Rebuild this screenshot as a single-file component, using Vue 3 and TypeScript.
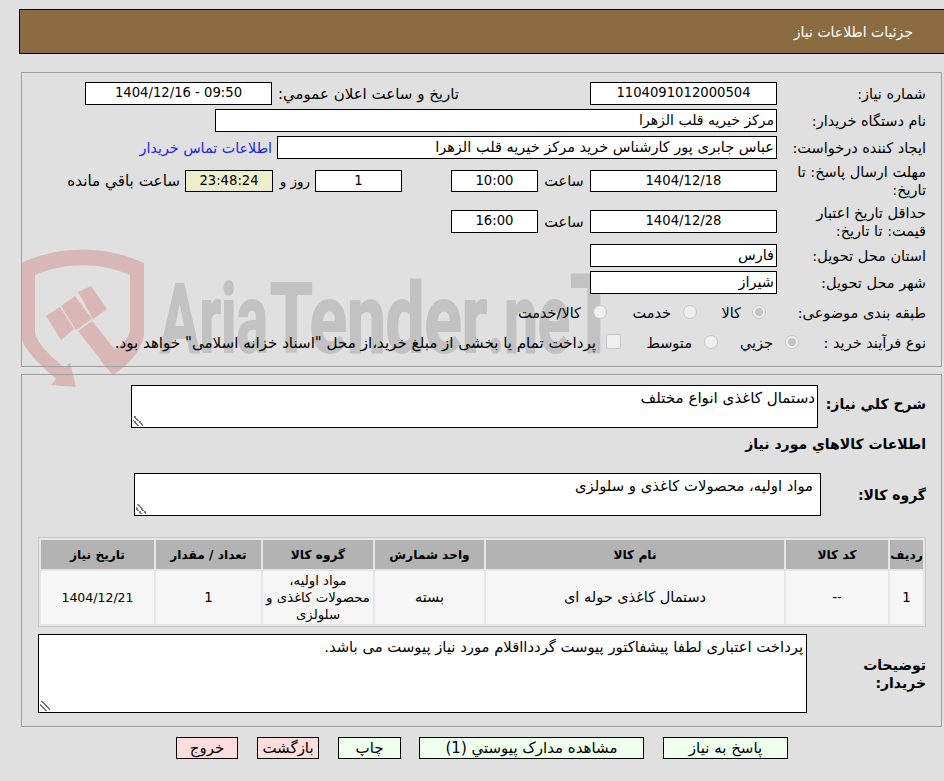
<script setup lang="ts">
interface GoodsRow { row: string; code: string; name: string; unit: string; group: string; qty: string; date: string }
const headers: string[] = ['ردیف', 'کد کالا', 'نام کالا', 'واحد شمارش', 'گروه کالا', 'تعداد / مقدار', 'تاریخ نیاز']
const rows: GoodsRow[] = [
  { row: '1', code: '--', name: 'دستمال کاغذی حوله ای', unit: 'بسته', group: 'مواد اولیه، محصولات کاغذی و سلولزی', qty: '1', date: '1404/12/21' }
]
</script>

<template>
  <div class="page" dir="rtl">
    <svg class="mark" width="640" height="160" viewBox="0 240 640 160" aria-hidden="true">
      <g fill="#d9b7b7">
        <path d="M21 263 C60 245 105 245 144 263 L144 335 C141 352 128 365 113 375 L100 360 C112 352 128 343 130 330 L130 275 C100 262 65 262 35 275 L35 333 C38 345 52 358 70 372 L60 382 C40 365 23 350 21 335 Z" />
        <path d="M51 385 L76 387 L70 362 Z" />
        <path d="M46 316 L60 307 L74 329 L61 340 Z" />
        <path d="M61 306 L75 296 L92 319 L76 330 Z" />
        <path d="M78 292 L91 286 L107 309 L93 319 Z" />
        <path d="M78 331 L92 321 L125 362 L113 375 Z" />
      </g>
      <g class="word">
        <text x="160" y="352" textLength="108" lengthAdjust="spacingAndGlyphs">Aria</text>
        <text x="270" y="352" textLength="217" lengthAdjust="spacingAndGlyphs">Tender</text>
        <text x="487" y="352" textLength="83" lengthAdjust="spacingAndGlyphs">.ne</text>
        <text class="tall" x="570" y="352" textLength="48" lengthAdjust="spacingAndGlyphs">T</text>
      </g>
    </svg>

    <header class="title">جزئیات اطلاعات نیاز</header>

    <section class="panel top">
      <div class="row r1">
        <label class="lbl">شماره نیاز:</label>
        <div class="box mid c">1104091012000504</div>
        <span class="lbl2 pub">تاریخ و ساعت اعلان عمومي:</span>
        <div class="box pubv c" dir="ltr">1404/12/16 - 09:50</div>
      </div>
      <div class="row r2">
        <label class="lbl">نام دستگاه خریدار:</label>
        <div class="box buyer">مرکز خیریه قلب الزهرا</div>
      </div>
      <div class="row r3">
        <label class="lbl">ایجاد کننده درخواست:</label>
        <div class="box creator">عباس جابری پور کارشناس خرید مرکز خیریه قلب الزهرا</div>
        <a class="contact">اطلاعات تماس خریدار</a>
      </div>
      <div class="row r4">
        <label class="lbl">مهلت ارسال پاسخ: تا تاریخ:</label>
        <div class="box mid c">1404/12/18</div>
        <span class="lbl2 hr">ساعت</span>
        <div class="box time c">10:00</div>
        <div class="box days c">1</div>
        <span class="lbl2 rooz">روز و</span>
        <div class="box remain c">23:48:24</div>
        <span class="lbl2 left">ساعت باقي مانده</span>
      </div>
      <div class="row r5">
        <label class="lbl">حداقل تاریخ اعتبار قیمت: تا تاریخ:</label>
        <div class="box mid c">1404/12/28</div>
        <span class="lbl2 hr">ساعت</span>
        <div class="box time c">16:00</div>
      </div>
      <div class="row r6">
        <label class="lbl">استان محل تحویل:</label>
        <div class="box mid">فارس</div>
      </div>
      <div class="row r7">
        <label class="lbl">شهر محل تحویل:</label>
        <div class="box mid">شیراز</div>
      </div>
      <div class="row r8">
        <label class="lbl">طبقه بندی موضوعی:</label>
        <span class="radio on a1"></span><span class="opt w1">کالا</span>
        <span class="radio a2"></span><span class="opt w2">خدمت</span>
        <span class="radio a3"></span><span class="opt w3">کالا/خدمت</span>
      </div>
      <div class="row r9">
        <label class="lbl">نوع فرآیند خرید :</label>
        <span class="radio on b1"></span><span class="opt v1">جزيي</span>
        <span class="radio b2"></span><span class="opt v2">متوسط</span>
        <span class="check"></span><span class="opt v3">پرداخت تمام یا بخشی از مبلغ خرید،از محل "اسناد خزانه اسلامی" خواهد بود.</span>
      </div>
    </section>

    <section class="panel bottom">
      <div class="row s1">
        <label class="blbl l1">شرح کلي نیاز:</label>
        <div class="area a-desc">دستمال کاغذی انواع مختلف<i class="grip"></i></div>
      </div>
      <h3 class="blbl goods">اطلاعات کالاهاي مورد نیاز</h3>
      <div class="row s2">
        <label class="blbl l2">گروه کالا:</label>
        <div class="area a-group">مواد اولیه، محصولات کاغذی و سلولزی<i class="grip"></i></div>
      </div>
      <table class="grid">
        <colgroup>
          <col class="k1" /><col class="k2" /><col class="k3" /><col class="k4" /><col class="k5" /><col class="k6" /><col />
        </colgroup>
        <thead>
          <tr><th v-for="h in headers" :key="h">{{ h }}</th></tr>
        </thead>
        <tbody>
          <tr v-for="r in rows" :key="r.row">
            <td>{{ r.row }}</td><td>{{ r.code }}</td><td class="big">{{ r.name }}</td><td class="big">{{ r.unit }}</td>
            <td>{{ r.group }}</td><td>{{ r.qty }}</td><td class="date">{{ r.date }}</td>
          </tr>
        </tbody>
      </table>
      <div class="row s3">
        <label class="blbl l3">توضیحات خریدار:</label>
        <div class="area a-note">پرداخت اعتباری لطفا پیشفاکتور پیوست گرددااقلام مورد نیاز پیوست می باشد.<i class="grip"></i></div>
      </div>
    </section>

    <footer class="actions">
      <button class="btn ok w-reply">پاسخ به نیاز</button>
      <button class="btn ok w-docs">مشاهده مدارک پیوستي (1)</button>
      <button class="btn ok w-print">چاپ</button>
      <button class="btn no w-back">بازگشت</button>
      <button class="btn no w-exit">خروج</button>
    </footer>
  </div>
</template>

<style>
html, body { margin: 0; background: #e0e0e0; }
</style>

<style scoped>
.page {
  position: relative; width: 944px; height: 781px; box-sizing: border-box; padding-top: 9px; overflow: hidden;
  background: #e0e0e0; color: #000;
  font-family: "DejaVu Sans", "Liberation Sans", sans-serif; font-size: 14.5px; line-height: 18px;
}
.mark { position: absolute; left: 0; top: 240px; direction: ltr; pointer-events: none; }
.word { font-family: "Roboto", "Liberation Sans", sans-serif; font-weight: 700; font-size: 97px; fill: #c2c2c2; stroke: #c2c2c2; stroke-width: 2px; stroke-linejoin: round; }
.tall { font-size: 110px; }
.title {
  position: relative; box-sizing: border-box; height: 45px; margin: 0 0 0 19px; border: 1px solid #000; border-right: 0;
  background: #8b6b40; color: #fff; padding: 13px 31px 0 0; font-size: 14px;
}
.panel { position: relative; box-sizing: border-box; margin: 18px 2px 0 21px; border: 1px solid #a0a0a0; }
.top { height: 295px; }
.bottom { height: 353px; margin-top: 7px; }
.row { position: relative; display: flex; align-items: center; }
.lbl { flex: none; box-sizing: border-box; width: 164px; padding-right: 15px; }
.box {
  flex: none; box-sizing: border-box; height: 23px; line-height: 20px; border: 1px solid #000; background: #fff;
  padding: 0 2px; white-space: nowrap; overflow: hidden;
}
.c { text-align: center; font-size: 13.2px; }
.mid { width: 187px; }
.lbl2 { flex: none; white-space: nowrap; }
.r1 { margin-top: 9px; height: 23px; }
.pub { margin-right: 131px; width: 182px; font-size: 15px; }
.pubv { width: 187px; margin-right: 5px; }
.r2 { margin-top: 4px; height: 23px; }
.buyer { width: 562px; font-size: 14px; }
.r3 { margin-top: 4px; height: 23px; }
.creator { width: 500px; }
.contact { color: #2222ee; margin-right: 5px; white-space: nowrap; font-size: 14.3px; }
.r4 { margin-top: 11px; height: 22px; }
.r4 .box { height: 22px; }
.hr { width: 52px; text-align: center; }
.time { width: 87px; }
.days { width: 87px; margin-right: 49px; }
.rooz { width: 37px; padding-right: 5px; font-size: 13.5px; }
.remain { width: 88px; background: #eeeecc; }
.left { margin-right: 5px; font-size: 15.2px; }
.r5 { margin-top: 18px; height: 23px; }
.r6 { margin-top: 11px; height: 23px; }
.r7 { margin-top: 4px; height: 23px; }
.r8 { margin-top: 8px; height: 22px; }
.r9 { margin-top: 8px; height: 22px; }
.r9 .lbl { width: 142px; white-space: nowrap; }
.radio { flex: none; position: relative; box-sizing: border-box; width: 14px; height: 14px; margin-top: -3px; border-radius: 50%; border: 1px solid #c8c8c8; background: #efefef; }
.radio.on::after { content: ""; position: absolute; inset: 2px; border-radius: 50%; background: #c4c4c4; }
.check { flex: none; box-sizing: border-box; width: 15px; height: 15px; margin: -3px 26px 0 0; border-radius: 2px; border: 1px solid #c8c8c8; background: #efefef; }
.opt { flex: none; white-space: nowrap; }
.a1 { margin-right: 11px; }
.w1 { margin-right: 11px; width: 20px; }
.a2 { margin-right: 24px; }
.w2 { margin-right: 12px; width: 40px; }
.a3 { margin-right: 24px; }
.w3 { margin-right: 12px; }
.v1 { margin-right: 12px; width: 35px; }
.b2 { margin-right: 20px; }
.v2 { margin-right: 12px; width: 45px; }
.v3 { margin-right: 10px; font-size: 15.1px; }
.blbl { font-weight: 700; font-size: 14px; margin: 0; }
.s1 { margin-top: 10px; align-items: flex-start; }
.l1 { width: 123px; flex: none; box-sizing: border-box; padding: 10px 15px 0 0; }
.area {
  position: relative; flex: none; box-sizing: border-box; border: 1px solid #000; background: #fff;
  padding: 3px 2px 0 0; font-size: 14.8px;
}
.a-desc { width: 687px; height: 43px; font-size: 15.1px; }
.goods { margin: 7px 15px 0 0; height: 18px; }
.s2 { margin-top: 20px; align-items: flex-start; }
.l2 { width: 120px; flex: none; box-sizing: border-box; padding: 13px 15px 0 0; }
.a-group { width: 687px; height: 43px; padding-right: 7px; }
.grid {
  box-sizing: border-box; width: 888px; margin: 21px 15px 0 0; table-layout: fixed;
  border-collapse: separate; border-spacing: 2px; border: 1px solid #c8c8c8; background: #e6e6e6;
  font-size: 13.3px;
}
.k1 { width: 33px; } .k2 { width: 102px; } .k3 { width: 298px; } .k4 { width: 109px; } .k5 { width: 110px; } .k6 { width: 105px; }
th { background: #b3b3b3; height: 29px; padding: 0; font-size: 12.2px; font-weight: 700; white-space: nowrap; }
td { background: #f6f6f6; height: 53px; padding: 0; text-align: center; line-height: 17px; }
td.big { font-size: 14.5px; }
td.date { font-size: 12.5px; }
.s3 { margin-top: 7px; align-items: flex-start; }
.l3 { width: 134px; flex: none; box-sizing: border-box; padding: 22px 15px 0 12px; line-height: 18px; }
.a-note { width: 769px; height: 79px; padding-right: 3px; }
.grip {
  position: absolute; left: 1px; bottom: 1px; width: 10px; height: 10px;
  background: linear-gradient(45deg, transparent 0 25%, #777 25% 35%, transparent 35% 50%, #777 50% 60%, transparent 60%);
}
.actions { position: relative; display: flex; margin-top: 10px; padding-right: 156px; gap: 19px; }
.btn {
  box-sizing: border-box; flex: none; height: 22px; border: 1px solid #000; padding: 0;
  font: inherit; font-size: 15px; color: #000; cursor: pointer;
}
.ok { background: #eeffee; }
.no { background: #ffdddd; }
.w-reply { width: 125px; }
.w-docs { width: 225px; }
.w-print { width: 63px; margin-right: -1px; }
.w-back { width: 62px; }
.w-exit { width: 62px; }
</style>
